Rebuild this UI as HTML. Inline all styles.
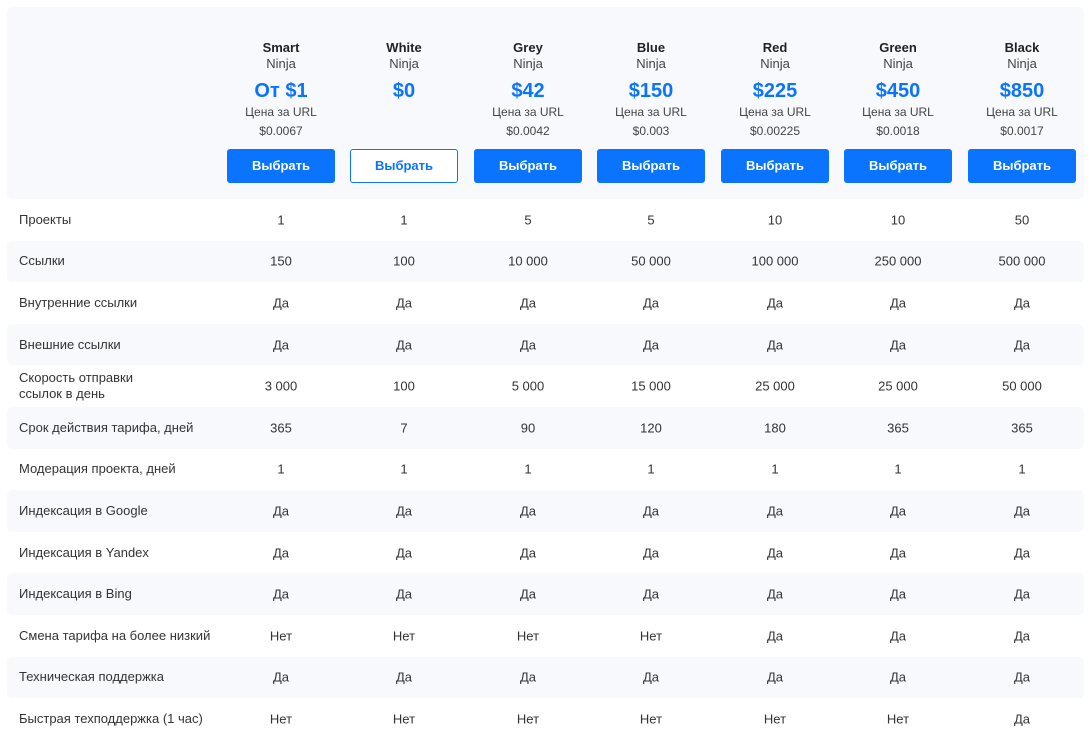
<!DOCTYPE html>
<html><head><meta charset="utf-8"><style>
*{margin:0;padding:0;box-sizing:border-box}
body{width:1092px;height:745px;background:#fff;font-family:"Liberation Sans",sans-serif;color:#333;position:relative;overflow:hidden}
.head{position:absolute;left:7px;top:7px;width:1077px;height:192px;background:#f7f9fc;border-radius:5px}
.col{position:absolute;top:0;width:124px;text-align:center}
.n{position:absolute;top:33px;width:100%;font-size:13px;font-weight:bold;color:#222}
.s{position:absolute;top:49px;width:100%;font-size:13px;color:#444}
.p{position:absolute;top:73px;width:100%;font-size:20px;font-weight:bold;color:#0a74ff}
.u{position:absolute;top:98px;width:100%;font-size:12px;color:#444}
.v{position:absolute;top:117px;width:100%;font-size:12px;color:#444}
.b{position:absolute;top:142px;left:8px;width:108px;height:34px;border-radius:3px;background:#0a74ff;color:#fff;font-size:13px;font-weight:bold;line-height:34px}
.b.o{background:#fff;border:1px solid #0a74ff;color:#0a74ff;line-height:32px}
.row{position:absolute;left:7px;width:1077px;height:41.6px;font-size:13px;color:#333}
.row.sh{background:#f7f9fc;border-radius:5px}
.row .l{position:absolute;left:12px;top:50%;transform:translateY(-50%);line-height:16px}
.row .c{position:absolute;top:50%;transform:translateY(-50%);width:124px;text-align:center}
</style></head><body>
<div class="head">
<div class="col" style="left:212px"><div class="n">Smart</div><div class="s">Ninja</div><div class="p">От $1</div><div class="u">Цена за URL</div><div class="v">$0.0067</div><div class="b">Выбрать</div></div>
<div class="col" style="left:335px"><div class="n">White</div><div class="s">Ninja</div><div class="p">$0</div><div class="b o">Выбрать</div></div>
<div class="col" style="left:459px"><div class="n">Grey</div><div class="s">Ninja</div><div class="p">$42</div><div class="u">Цена за URL</div><div class="v">$0.0042</div><div class="b">Выбрать</div></div>
<div class="col" style="left:582px"><div class="n">Blue</div><div class="s">Ninja</div><div class="p">$150</div><div class="u">Цена за URL</div><div class="v">$0.003</div><div class="b">Выбрать</div></div>
<div class="col" style="left:706px"><div class="n">Red</div><div class="s">Ninja</div><div class="p">$225</div><div class="u">Цена за URL</div><div class="v">$0.00225</div><div class="b">Выбрать</div></div>
<div class="col" style="left:829px"><div class="n">Green</div><div class="s">Ninja</div><div class="p">$450</div><div class="u">Цена за URL</div><div class="v">$0.0018</div><div class="b">Выбрать</div></div>
<div class="col" style="left:953px"><div class="n">Black</div><div class="s">Ninja</div><div class="p">$850</div><div class="u">Цена за URL</div><div class="v">$0.0017</div><div class="b">Выбрать</div></div>
</div>
<div id="rows"></div>
<script>
var d=[["Проекты","1","1","5","5","10","10","50"],
["Ссылки","150","100","10 000","50 000","100 000","250 000","500 000"],
["Внутренние ссылки","Да","Да","Да","Да","Да","Да","Да"],
["Внешние ссылки","Да","Да","Да","Да","Да","Да","Да"],
["Скорость отправки<br>ссылок в день","3 000","100","5 000","15 000","25 000","25 000","50 000"],
["Срок действия тарифа, дней","365","7","90","120","180","365","365"],
["Модерация проекта, дней","1","1","1","1","1","1","1"],
["Индексация в Google","Да","Да","Да","Да","Да","Да","Да"],
["Индексация в Yandex","Да","Да","Да","Да","Да","Да","Да"],
["Индексация в Bing","Да","Да","Да","Да","Да","Да","Да"],
["Смена тарифа на более низкий","Нет","Нет","Нет","Нет","Да","Да","Да"],
["Техническая поддержка","Да","Да","Да","Да","Да","Да","Да"],
["Быстрая техподдержка (1 час)","Нет","Нет","Нет","Нет","Нет","Нет","Да"]];
var lefts=[212,335,459,582,706,829,953],h="";
d.forEach(function(r,i){h+='<div class="row'+(i%2?' sh':'')+'" style="top:'+(199+i*41.6)+'px"><div class="l">'+r[0]+'</div>';
for(var j=1;j<8;j++)h+='<div class="c" style="left:'+lefts[j-1]+'px">'+r[j]+'</div>';h+='</div>';});
document.getElementById('rows').innerHTML=h;
</script>
</body></html>
